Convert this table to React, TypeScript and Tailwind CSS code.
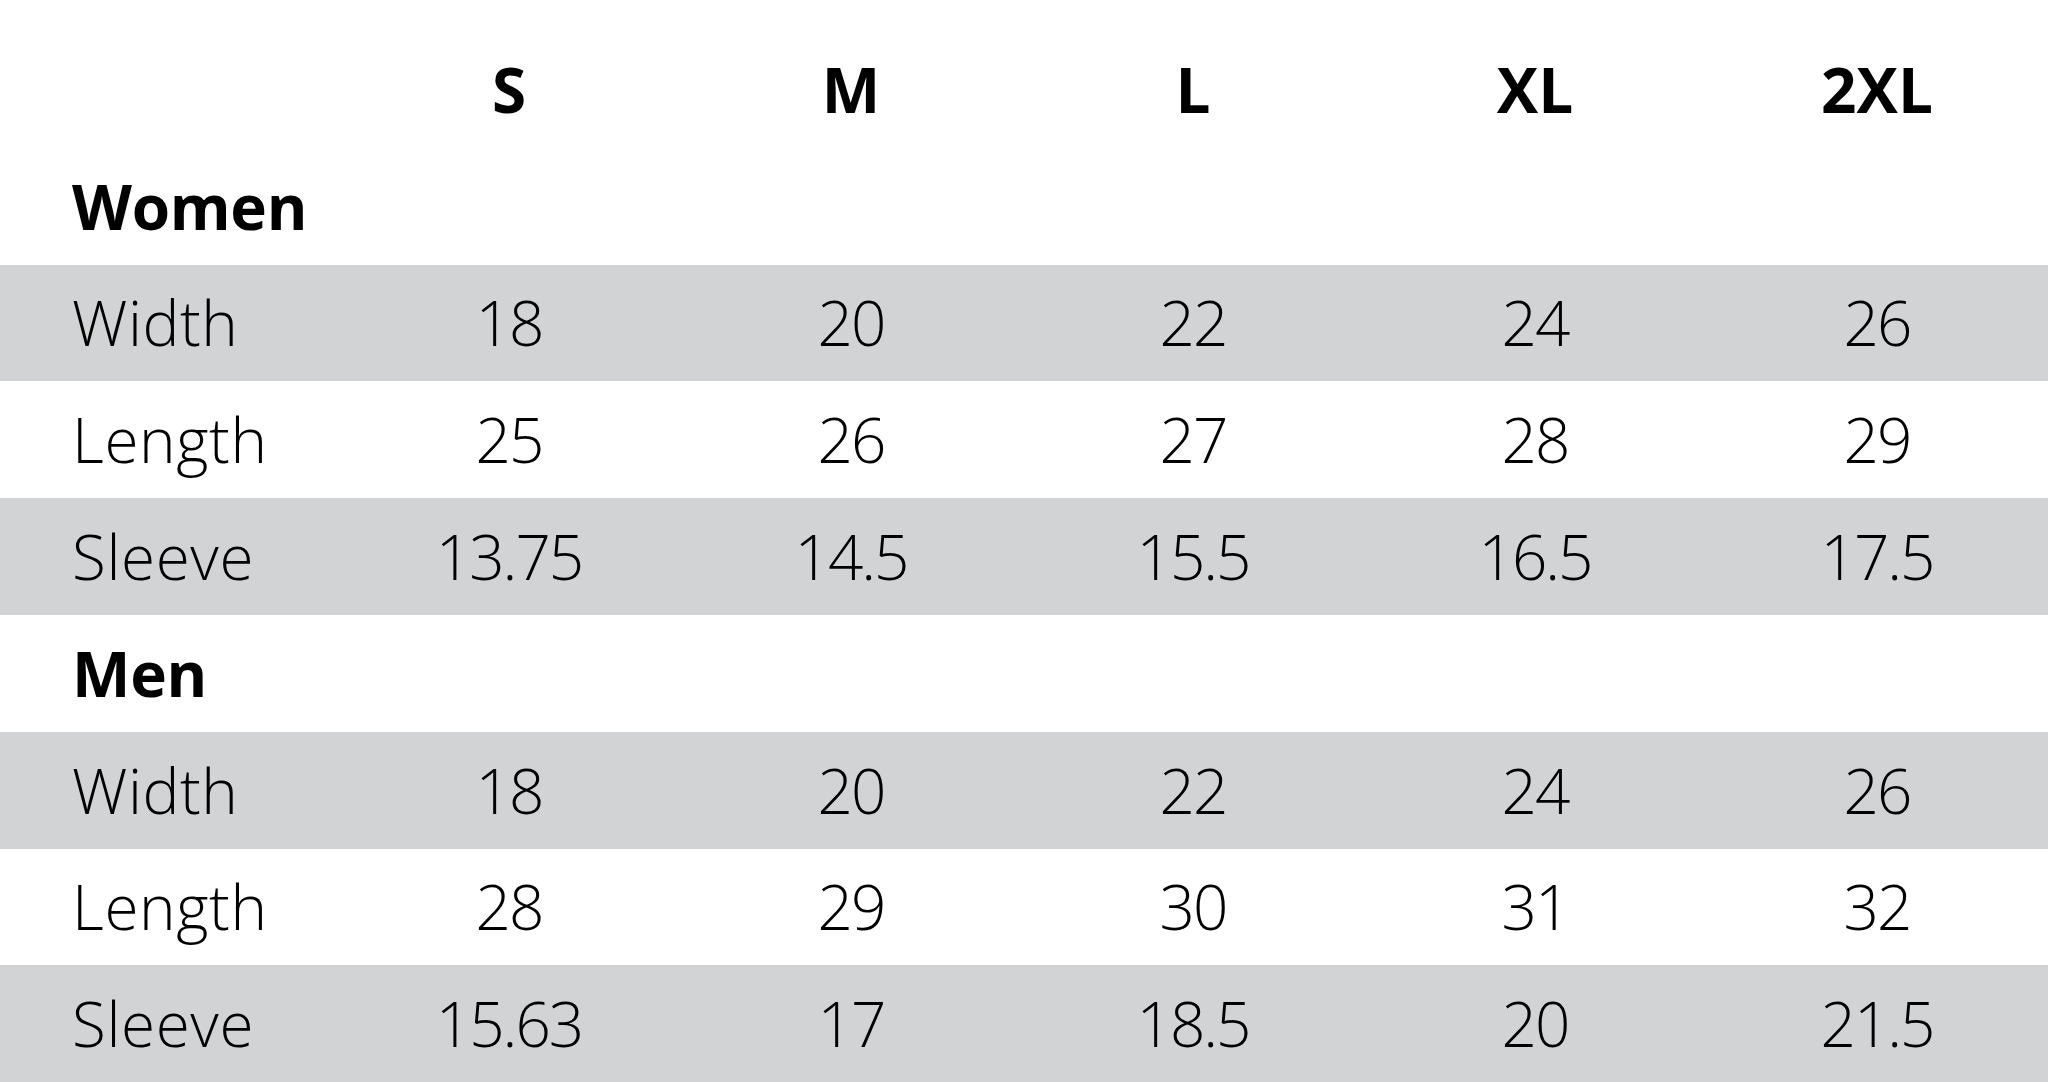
const sizes = ["S", "M", "L", "XL", "2XL"];

const groups = [
  {
    name: "Women",
    rows: [
      { label: "Width", values: ["18", "20", "22", "24", "26"] },
      { label: "Length", values: ["25", "26", "27", "28", "29"] },
      { label: "Sleeve", values: ["13.75", "14.5", "15.5", "16.5", "17.5"] },
    ],
  },
  {
    name: "Men",
    rows: [
      { label: "Width", values: ["18", "20", "22", "24", "26"] },
      { label: "Length", values: ["28", "29", "30", "31", "32"] },
      { label: "Sleeve", values: ["15.63", "17", "18.5", "20", "21.5"] },
    ],
  },
];

const rowClass = "grid grid-cols-[338px_repeat(5,1fr)] h-[116.8px] items-center";

const App = () => {
  return (
    <div
      className="w-full min-h-screen bg-white pt-[31px] text-black"
      style={{ fontFamily: '"Open Sans", "Noto Sans", sans-serif' }}
    >
      <div className={rowClass}>
        <div></div>
        {sizes.map((s) => (
          <div key={s} className="text-center text-[62px] font-bold tracking-[0px]">
            {s}
          </div>
        ))}
      </div>
      {groups.map((g) => (
        <div key={g.name}>
          <div className={rowClass}>
            <div className="pl-[72px] text-[62px] font-bold tracking-[-0.3px]">{g.name}</div>
          </div>
          {g.rows.map((r, i) => (
            <div key={r.label} className={`${rowClass} ${i % 2 === 0 ? "bg-[#d1d3d4]" : "bg-white"}`}>
              <div className="pl-[72px] text-[62px] font-light tracking-[0.6px]">{r.label}</div>
              {r.values.map((v, j) => (
                <div key={j} className="text-center text-[62px] font-light tracking-[-2px]">
                  {v}
                </div>
              ))}
            </div>
          ))}
        </div>
      ))}
    </div>
  );
};

export default App;
